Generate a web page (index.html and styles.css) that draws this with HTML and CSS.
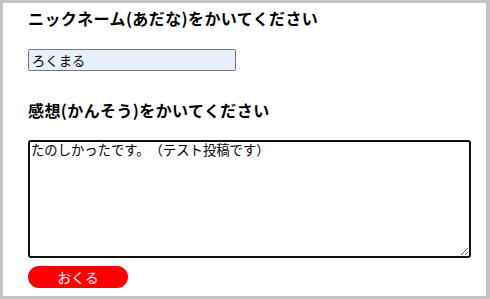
FILE: index.html
```html
<!DOCTYPE html>
<html lang="ja">
<head>
<meta charset="utf-8">
<link rel="stylesheet" href="styles.css">
</head>
<body>
<div class="frame">
  <form class="form">
    <h2 class="label">ニックネーム(あだな)をかいてください</h2>
    <input class="nick" type="text" value="ろくまる">
    <h2 class="label label-2">感想(かんそう)をかいてください</h2>
    <textarea class="comment">たのしかったです。（テスト投稿です）</textarea>
    <button class="send" type="button">おくる</button>
  </form>
</div>
</body>
</html>
```
FILE: styles.css
```css
html, body {
  margin: 0;
  padding: 0;
  background: #fff;
}
.frame {
  box-sizing: border-box;
  width: 490px;
  height: 299px;
  border: 3px solid #c3c3c3;
  border-right-width: 4px;
  padding: 4px 25px 0;
  font-family: "Noto Sans CJK JP", "Noto Sans", sans-serif;
  text-spacing-trim: space-all;
}
.form {
  display: flex;
  flex-direction: column;
  align-items: flex-start;
}
.label {
  margin: 0;
  font-size: 16px;
  font-weight: bold;
  line-height: 22px;
  letter-spacing: 0.4px;
  color: #000;
}
.nick {
  box-sizing: border-box;
  margin-top: 20px;
  width: 208px;
  height: 22px;
  padding: 0 3px;
  border: 1px solid #767676;
  border-radius: 2px;
  background: #e8f0fe;
  font-family: "Noto Sans CJK JP", sans-serif;
  font-size: 13.33px;
  line-height: 18px;
  color: #000;
}
.label-2 {
  margin-top: 28px;
}
.comment {
  box-sizing: border-box;
  margin-top: 19px;
  width: 443px;
  height: 118px;
  padding: 0 1px;
  border: 2px solid #111;
  border-radius: 3px;
  font-family: "Noto Sans CJK JP", sans-serif;
  font-size: 13.33px;
  line-height: 16px;
  color: #000;
  resize: both;
  text-spacing-trim: space-all;
}
.send {
  margin-top: 8px;
  width: 100px;
  height: 22px;
  padding: 0;
  border: none;
  border-radius: 11px;
  background: #ff0000;
  color: #fff;
  font-family: "Noto Sans CJK JP", sans-serif;
  font-size: 14px;
  line-height: 22px;
}
```
